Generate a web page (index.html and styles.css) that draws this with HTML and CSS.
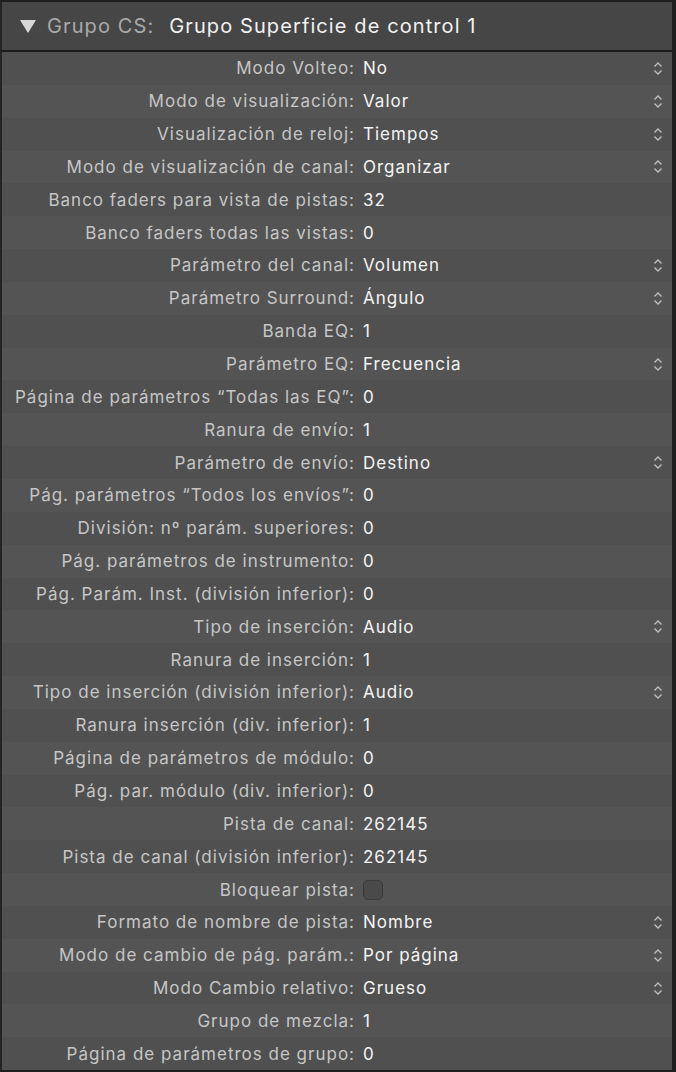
FILE: index.html
```html
<!DOCTYPE html>
<html lang="es">
<head>
<meta charset="utf-8">
<link rel="stylesheet" href="styles.css">
</head>
<body>
<div class="panel">
  <div class="header">
    <span class="tri"></span>
    <span class="hlabel">Grupo CS:</span>
    <span class="hvalue">Grupo Superficie de control 1</span>
  </div>
  <div class="rows">
    <div class="row"><span class="lbl">Modo Volteo:</span><span class="val">No</span><span class="chev"><svg width="10" height="15" viewBox="0 0 10 15"><path d="M1.5 5.5 L5 2 L8.5 5.5 M1.5 9.5 L5 13 L8.5 9.5" fill="none" stroke="#bdbdbd" stroke-width="1.4"/></svg></span></div>
    <div class="row"><span class="lbl">Modo de visualización:</span><span class="val">Valor</span><span class="chev"><svg width="10" height="15" viewBox="0 0 10 15"><path d="M1.5 5.5 L5 2 L8.5 5.5 M1.5 9.5 L5 13 L8.5 9.5" fill="none" stroke="#bdbdbd" stroke-width="1.4"/></svg></span></div>
    <div class="row"><span class="lbl">Visualización de reloj:</span><span class="val">Tiempos</span><span class="chev"><svg width="10" height="15" viewBox="0 0 10 15"><path d="M1.5 5.5 L5 2 L8.5 5.5 M1.5 9.5 L5 13 L8.5 9.5" fill="none" stroke="#bdbdbd" stroke-width="1.4"/></svg></span></div>
    <div class="row"><span class="lbl">Modo de visualización de canal:</span><span class="val">Organizar</span><span class="chev"><svg width="10" height="15" viewBox="0 0 10 15"><path d="M1.5 5.5 L5 2 L8.5 5.5 M1.5 9.5 L5 13 L8.5 9.5" fill="none" stroke="#bdbdbd" stroke-width="1.4"/></svg></span></div>
    <div class="row"><span class="lbl">Banco faders para vista de pistas:</span><span class="val">32</span></div>
    <div class="row"><span class="lbl">Banco faders todas las vistas:</span><span class="val">0</span></div>
    <div class="row"><span class="lbl">Parámetro del canal:</span><span class="val">Volumen</span><span class="chev"><svg width="10" height="15" viewBox="0 0 10 15"><path d="M1.5 5.5 L5 2 L8.5 5.5 M1.5 9.5 L5 13 L8.5 9.5" fill="none" stroke="#bdbdbd" stroke-width="1.4"/></svg></span></div>
    <div class="row"><span class="lbl">Parámetro Surround:</span><span class="val">Ángulo</span><span class="chev"><svg width="10" height="15" viewBox="0 0 10 15"><path d="M1.5 5.5 L5 2 L8.5 5.5 M1.5 9.5 L5 13 L8.5 9.5" fill="none" stroke="#bdbdbd" stroke-width="1.4"/></svg></span></div>
    <div class="row"><span class="lbl">Banda EQ:</span><span class="val">1</span></div>
    <div class="row"><span class="lbl">Parámetro EQ:</span><span class="val">Frecuencia</span><span class="chev"><svg width="10" height="15" viewBox="0 0 10 15"><path d="M1.5 5.5 L5 2 L8.5 5.5 M1.5 9.5 L5 13 L8.5 9.5" fill="none" stroke="#bdbdbd" stroke-width="1.4"/></svg></span></div>
    <div class="row"><span class="lbl">Página de parámetros “Todas las EQ”:</span><span class="val">0</span></div>
    <div class="row"><span class="lbl">Ranura de envío:</span><span class="val">1</span></div>
    <div class="row"><span class="lbl">Parámetro de envío:</span><span class="val">Destino</span><span class="chev"><svg width="10" height="15" viewBox="0 0 10 15"><path d="M1.5 5.5 L5 2 L8.5 5.5 M1.5 9.5 L5 13 L8.5 9.5" fill="none" stroke="#bdbdbd" stroke-width="1.4"/></svg></span></div>
    <div class="row"><span class="lbl">Pág. parámetros “Todos los envíos”:</span><span class="val">0</span></div>
    <div class="row"><span class="lbl">División: nº parám. superiores:</span><span class="val">0</span></div>
    <div class="row"><span class="lbl">Pág. parámetros de instrumento:</span><span class="val">0</span></div>
    <div class="row"><span class="lbl">Pág. Parám. Inst. (división inferior):</span><span class="val">0</span></div>
    <div class="row"><span class="lbl">Tipo de inserción:</span><span class="val">Audio</span><span class="chev"><svg width="10" height="15" viewBox="0 0 10 15"><path d="M1.5 5.5 L5 2 L8.5 5.5 M1.5 9.5 L5 13 L8.5 9.5" fill="none" stroke="#bdbdbd" stroke-width="1.4"/></svg></span></div>
    <div class="row"><span class="lbl">Ranura de inserción:</span><span class="val">1</span></div>
    <div class="row"><span class="lbl">Tipo de inserción (división inferior):</span><span class="val">Audio</span><span class="chev"><svg width="10" height="15" viewBox="0 0 10 15"><path d="M1.5 5.5 L5 2 L8.5 5.5 M1.5 9.5 L5 13 L8.5 9.5" fill="none" stroke="#bdbdbd" stroke-width="1.4"/></svg></span></div>
    <div class="row"><span class="lbl">Ranura inserción (div. inferior):</span><span class="val">1</span></div>
    <div class="row"><span class="lbl">Página de parámetros de módulo:</span><span class="val">0</span></div>
    <div class="row"><span class="lbl">Pág. par. módulo (div. inferior):</span><span class="val">0</span></div>
    <div class="row"><span class="lbl">Pista de canal:</span><span class="val">262145</span></div>
    <div class="row"><span class="lbl">Pista de canal (división inferior):</span><span class="val">262145</span></div>
    <div class="row"><span class="lbl">Bloquear pista:</span><span class="val"><span class="check"></span></span></div>
    <div class="row"><span class="lbl">Formato de nombre de pista:</span><span class="val">Nombre</span><span class="chev"><svg width="10" height="15" viewBox="0 0 10 15"><path d="M1.5 5.5 L5 2 L8.5 5.5 M1.5 9.5 L5 13 L8.5 9.5" fill="none" stroke="#bdbdbd" stroke-width="1.4"/></svg></span></div>
    <div class="row"><span class="lbl">Modo de cambio de pág. parám.:</span><span class="val">Por página</span><span class="chev"><svg width="10" height="15" viewBox="0 0 10 15"><path d="M1.5 5.5 L5 2 L8.5 5.5 M1.5 9.5 L5 13 L8.5 9.5" fill="none" stroke="#bdbdbd" stroke-width="1.4"/></svg></span></div>
    <div class="row"><span class="lbl">Modo Cambio relativo:</span><span class="val">Grueso</span><span class="chev"><svg width="10" height="15" viewBox="0 0 10 15"><path d="M1.5 5.5 L5 2 L8.5 5.5 M1.5 9.5 L5 13 L8.5 9.5" fill="none" stroke="#bdbdbd" stroke-width="1.4"/></svg></span></div>
    <div class="row"><span class="lbl">Grupo de mezcla:</span><span class="val">1</span></div>
    <div class="row"><span class="lbl">Página de parámetros de grupo:</span><span class="val">0</span></div>
  </div>
</div>
</body>
</html>
```

FILE: styles.css
```css
* { box-sizing: border-box; }
html, body { margin: 0; padding: 0; }
body {
  background: #1e1e1e;
  font-family: Inter, "Liberation Sans", sans-serif;
  width: 676px;
  height: 1072px;
}
.panel {
  width: 676px;
  height: 1072px;
  border-top: 2px solid #1f1f1f;
  border-left: 2px solid #242424;
  border-right: 4px solid #1f1f1f;
  border-bottom: 2px solid #1f1f1f;
  display: flex;
  flex-direction: column;
  background: #4f4f4f;
}
.header {
  height: 50px;
  flex: none;
  background: #464646;
  border-bottom: 2px solid #1b1b1b;
  display: flex;
  align-items: center;
  padding-left: 18px;
  font-size: 20px;
  letter-spacing: 1.1px;
}
.tri {
  width: 0; height: 0;
  border-left: 8px solid transparent;
  border-right: 8px solid transparent;
  border-top: 13px solid #d8d8d8;
  margin-right: 11px;
  margin-top: 1px;
}
.hlabel { color: #a9a9a9; margin-right: 15px; }
.hvalue { color: #f2f2f2; }
.rows {
  flex: 1;
  display: flex;
  flex-direction: column;
}
.row {
  flex: 1;
  display: grid;
  grid-template-columns: 352px 1fr 10px;
  column-gap: 9px;
  padding-right: 9px;
  align-items: center;
  font-size: 17px;
  letter-spacing: 1px;
  background: #505050;
}
.row:nth-child(even) { background: #545454; }
.lbl { text-align: right; color: #c6c6c6; white-space: nowrap; margin-right: -1px; }
.val { color: #f4f4f4; grid-column: 2; display: flex; align-items: center; }
.chev { grid-column: 3; display: flex; align-items: center; }
.check {
  width: 20px; height: 20px;
  border-radius: 5px;
  background: #4a4a4a;
  border: 1px solid #3a3a3a;
}
```
